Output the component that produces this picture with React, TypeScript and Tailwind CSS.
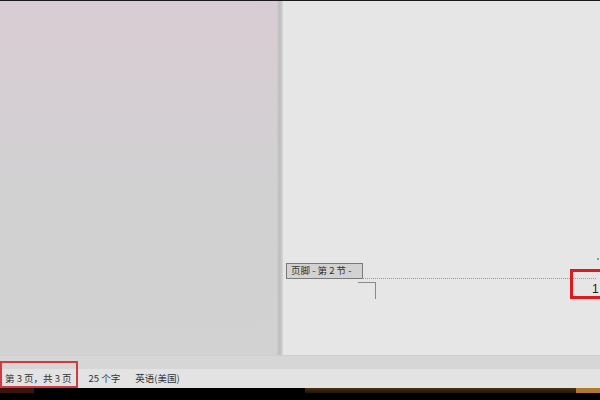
import React from "react";

const cjk = { fontFamily: '"Noto Sans CJK SC", "Noto Sans", sans-serif' };

function FooterArea() {
  return (
    <div className="relative h-[40px]">
      {/* footer tag */}
      <div className="absolute left-[3px] top-0 h-[16px] w-[77px] border border-[#7a7a7a] bg-[#d2d2d2] flex items-center pl-[4px] text-[9.5px] text-[#333] leading-none" style={cjk}>
        页脚 - 第 2 节 -
      </div>
      {/* dotted separator */}
      <div className="absolute left-[79px] right-[4px] top-[15px] border-t border-dotted border-[#9a9a9a]" />
      {/* corner mark */}
      <div className="absolute left-[75px] top-[19px] w-[18px] h-[17px] border-t border-r border-[#8a8a8a]" />
      {/* page number */}
      <div className="absolute left-[287px] top-[6px] w-[40px] h-[30px] border-[3px] border-[#e0191f] flex items-end justify-start pl-[19px] pb-[1px] text-[12px] leading-none text-[#222]" style={{ fontFamily: '"Liberation Sans", sans-serif' }}>
        1
      </div>
      <div className="absolute left-[314px] top-[-5px] w-[2px] h-[2px] bg-[#999]" />
    </div>
  );
}

export default function App() {
  return (
    <div className="w-[600px] h-[400px] overflow-hidden bg-black flex flex-col">
      <div className="h-[1px] bg-[#1a1a1a]" />
      <div className="flex h-[354px]">
        {/* left gray workspace */}
        <div className="w-[277px] bg-gradient-to-b from-[#d9ccd4] via-[#d2d1d2] to-[#d2d2d2]" />
        <div className="w-[6px] bg-gradient-to-r from-[#cbcbcb] via-[#bdbdbd] to-[#d8d8d8]" />
        {/* page */}
        <div className="flex-1 bg-[#e6e6e6] flex flex-col justify-end pb-[52px]">
          <FooterArea />
        </div>
      </div>
      {/* band under the page */}
      <div className="h-[14px] bg-[#d6d6d6] border-t border-[#cfcfcf]" />
      {/* status bar */}
      <div className="h-[19px] bg-[#e3e3e3] flex items-center text-[9.5px] text-[#333] relative" style={cjk}>
        <div className="absolute left-0 top-[-8px] w-[78px] h-[27px] border-2 border-[#d13a3e]" />
        <span className="ml-[5px]">第 3 页，共 3 页</span>
        <span className="ml-[17px]">25 个字</span>
        <span className="ml-[15px]">英语(美国)</span>
      </div>
      {/* taskbar remnants */}
      <div className="flex h-[5px]">
        <div className="w-[34px] bg-[#3a1410]" />
        <div className="w-[271px] bg-black" />
        <div className="w-[271px] bg-gradient-to-b from-[#4a3410] to-[#1e1408]" />
        <div className="flex-1 bg-[#b07a2a]" />
      </div>
      <div className="flex-1 bg-black" />
    </div>
  );
}
